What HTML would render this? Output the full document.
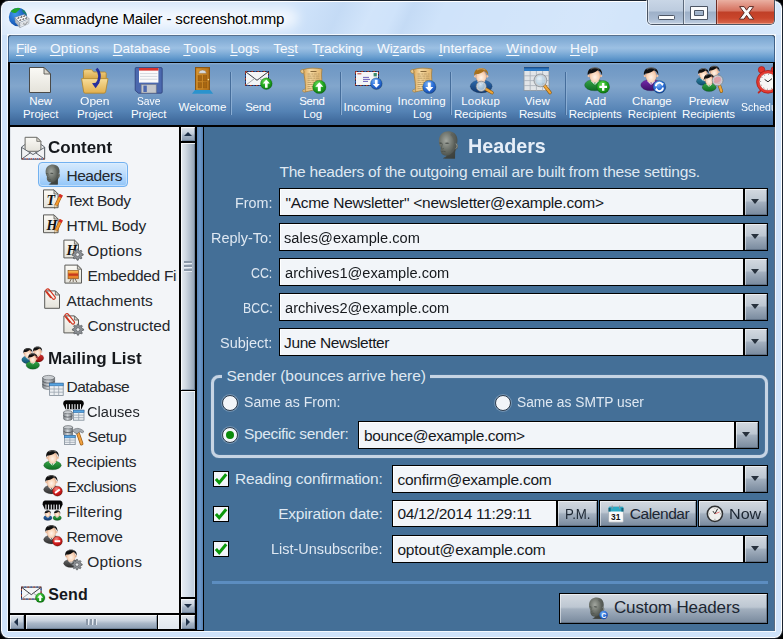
<!DOCTYPE html>
<html><head><meta charset="utf-8"><title>Gammadyne Mailer - screenshot.mmp</title>
<style>

html,body{margin:0;padding:0;}
body{width:783px;height:639px;background:#000;overflow:hidden;position:relative;font-family:"Liberation Sans",sans-serif;}
div,span,svg{position:absolute;box-sizing:border-box;}
.t{white-space:nowrap;line-height:1;z-index:50;}
.t u{text-decoration:underline;text-underline-offset:2.4px;text-decoration-thickness:1px;}
#win{left:0;top:0;width:783px;height:639px;border-radius:8.5px;background:#1b2430;overflow:hidden;}
#win2{left:1px;top:1px;width:781px;height:637px;border-radius:7.5px;background:#fff;}
#win3{left:2px;top:2px;width:779px;height:635px;border-radius:6.5px;background:#cfe3fa;}
#glass{left:2px;top:2px;width:779px;height:33px;border-radius:6.5px 6.5px 0 0;background:linear-gradient(115deg,rgba(255,255,255,.25) 0%,rgba(255,255,255,.1) 30%,rgba(255,255,255,0) 38%,rgba(120,160,210,.12) 43%,rgba(255,255,255,.06) 47%,rgba(255,255,255,0) 50%,rgba(120,160,210,.12) 52%,rgba(255,255,255,0) 56%,rgba(255,255,255,.12) 75%,rgba(255,255,255,.0) 88%,rgba(255,255,255,.2) 100%);}
#tglow{left:6px;top:8px;width:292px;height:20px;border-radius:10px;background:rgba(255,255,255,.7);filter:blur(6px);}

#capbtns{left:647px;top:0;width:128px;height:25px;border:1px solid #4a5565;border-top:none;border-radius:0 0 5px 5px;overflow:hidden;box-shadow:0 0 0 1px rgba(255,255,255,.55);}
#capbtns div{top:0;height:24px;}
.cb1{background:linear-gradient(180deg,#c9d6e6 0%,#bccbde 46%,#9db0c8 50%,#a9bbd2 80%,#c2d0e2 100%);box-shadow:inset 1px 0 0 rgba(255,255,255,.5),inset 0 -1px 0 rgba(255,255,255,.45);}
.cbx{background:linear-gradient(180deg,#eab0a2 0%,#dc8574 30%,#d4705d 46%,#c03f27 50%,#c9452b 75%,#d86a50 100%);border-left:1px solid #6b2d25;box-shadow:inset 1px 0 0 rgba(255,255,255,.35),inset 0 -1px 0 rgba(255,200,180,.5);}
#cliw{left:7px;top:34px;width:769px;height:598px;background:#f4f9fe;}
#client{left:8px;top:35px;width:767px;height:596px;background:#000;overflow:hidden;border-radius:3px 3px 0 0;}
#menubar{left:0;top:0;width:767px;height:27px;border-radius:3px 3px 0 0;border-top:1px solid #56708e;border-left:1px solid #3f6189;border-right:1px solid #3f6189;background:linear-gradient(180deg,#79a5d0 0%,#8bb3da 25%,#9cc0e3 46%,#8ab4dc 60%,#6a9fd0 80%,#4986c0 100%);}
#toolbar{left:2px;top:28px;width:763px;height:62px;background:linear-gradient(180deg,#8eb1d5 0,#6f98c4 2px,#769dc7 20%,#82a6cc 37%,#7ca1c9 43%,#6c95c2 58%,#5482b4 78%,#436ea0 92%,#3e699a 100%);}
.sep{width:2px;top:9px;height:43px;background:linear-gradient(90deg,#456d9b 0 1px,#8aadd3 1px 2px);}
#left{left:2px;top:92px;width:169px;height:486px;background:#f3f5f8;overflow:hidden;}
#left:before{content:"";position:absolute;left:0;top:0;width:1px;height:100%;background:#dfe3e8;}
#sel{left:28px;top:35px;width:90px;height:25px;border:1px solid #72b1f0;border-radius:4px;background:linear-gradient(180deg,#d6eafd 0%,#c0defc 40%,#a6d0fa 75%,#90c5f8 100%);box-shadow:inset 0 0 0 1px rgba(225,240,255,.55);}
.sbv{background:linear-gradient(90deg,#e7ecf2 0%,#d3dbe4 30%,#b4c0ce 65%,#8fa0b3 100%);box-shadow:inset 1px 1px 0 rgba(255,255,255,.8),inset -1px -1px 0 rgba(100,118,140,.6);}
.sbbtn{background:linear-gradient(180deg,#e3e8ee 0%,#c4ceda 45%,#a6b4c5 60%,#8a9bb0 100%);box-shadow:inset 1px 1px 0 rgba(255,255,255,.65),inset -1px -1px 0 rgba(90,110,135,.55);}

i{position:absolute;display:block;}
.sbh{background:linear-gradient(180deg,#e6ebf1 0%,#c9d2dd 40%,#a9b7c7 60%,#8a9bb0 100%);box-shadow:inset 1px 1px 0 rgba(255,255,255,.7),inset -1px -1px 0 rgba(100,118,140,.6);}
.sbtv{background:linear-gradient(90deg,#e9eef4 0%,#d5dfea 50%,#bccbdb 100%);box-shadow:inset 1px 1px 0 rgba(255,255,255,.8),inset -1px 0 0 rgba(255,255,255,.5);}
.sbth{background:linear-gradient(180deg,#eef2f6 0%,#dfe6ee 100%);box-shadow:inset 1px 1px 0 rgba(255,255,255,.8);}
.arr{width:0;height:0;}
.au{left:3px;top:5px;border-left:4px solid transparent;border-right:4px solid transparent;border-bottom:4px solid #1f3148;}
.ad{left:3px;top:5px;border-left:4px solid transparent;border-right:4px solid transparent;border-top:4px solid #1f3148;}
.al{left:4px;top:3px;border-top:4px solid transparent;border-bottom:4px solid transparent;border-right:4px solid #1f3148;}
.ar{left:5px;top:3px;border-top:4px solid transparent;border-bottom:4px solid transparent;border-left:4px solid #1f3148;}
.gv{left:3px;width:8px;height:2px;background:#8b98a8;box-shadow:0 1px 0 rgba(235,240,246,.9);}
.gh{top:4px;width:2px;height:6px;background:#8b98a8;box-shadow:1px 0 0 rgba(235,240,246,.9);}
#split{left:189px;top:92px;width:6px;height:503px;background:linear-gradient(90deg,#5d88b9 0%,#6f9aca 50%,#5580b2 100%);}
#right{left:196px;top:92px;width:571px;height:504px;background:#446f97;border-right:1px solid #5b6b7e;}
.inp{background:#f2f5f9;border:1px solid #000;height:28px;box-shadow:inset 1px 1px 0 #fff;}
.btn{border:1px solid #000;background:linear-gradient(180deg,#d3d9e0 0%,#bdc7d2 45%,#a2afbe 52%,#78899d 100%);box-shadow:inset 1px 1px 0 rgba(255,255,255,.5),inset -1px -1px 0 rgba(70,85,105,.5);}
.dd{width:24px;height:28px;}
.dd:after{content:"";position:absolute;left:6px;top:10px;border-left:4.5px solid transparent;border-right:4.5px solid transparent;border-top:5px solid #27313d;}
.cb{width:16px;height:16px;border:1px solid #000;background:#f2f5f9;}
.rb{width:16px;height:16px;border-radius:8px;background:#f2f5f9;border:1px solid #2b3b4e;box-shadow:0 0 0 1px rgba(200,215,230,.35);}
.rb.on:after{content:"";position:absolute;left:3px;top:3px;width:8px;height:8px;border-radius:4px;background:#0b8a0b;}

</style></head><body>

<div id="win"><div id="win2"></div><div id="win3"></div><div id="glass"></div><div id="tglow"></div>

<div id="capbtns">
 <div class="cb1" style="left:0;width:35px;border-radius:0 0 0 4px"></div>
 <div class="cb1" style="left:35px;width:33px;border-left:1px solid #5d6a7c"></div>
 <div class="cbx" style="left:68px;width:60px;border-radius:0 0 4px 0"></div>
 <svg width="128" height="25" viewBox="0 0 128 25" style="left:0;top:0">
  <rect x="10.5" y="15.5" width="16" height="4" rx=".8" fill="#fbfcfd" stroke="#4c5564" stroke-width="1"/>
  <path d="M42.5 6.5 H59.5 V19.5 H42.5 Z M46.5 10.5 V15.5 H55.5 V10.5 Z" fill="#fbfcfd" fill-rule="evenodd" stroke="#4c5564" stroke-width="1" stroke-linejoin="round"/>
  <path d="M91.6 6.6 H96.2 L98.6 10.2 L101 6.6 H105.6 L101 12.8 L105.8 19.2 H101.2 L98.6 15.4 L96 19.2 H91.4 L96.2 12.8 Z" fill="#fbfbfb" stroke="#5a2a24" stroke-width="1" stroke-linejoin="round"/>
 </svg>
</div>
<div id="cliw"></div>
<div id="client">
 <div id="menubar"></div>
 <div id="toolbar"><div class="sep" style="left:220px"></div><div class="sep" style="left:330px"></div><div class="sep" style="left:440px"></div><div class="sep" style="left:555px"></div></div>
 <div id="left"><div id="sel"></div></div>
 <!-- vertical scrollbar (client-relative: abs-8, abs-35) -->
 <div class="sbbtn" style="left:173px;top:92px;width:14px;height:14px"><i class="arr au"></i></div>
 <div class="sbv" style="left:173px;top:108px;width:14px;height:247px"><i class="gv" style="top:118px"></i><i class="gv" style="top:122px"></i><i class="gv" style="top:126px"></i></div>
 <div class="sbtv" style="left:173px;top:356px;width:14px;height:206px"></div>
 <div class="sbbtn" style="left:173px;top:564px;width:14px;height:14px"><i class="arr ad"></i></div>
 <!-- horizontal scrollbar -->
 <div class="sbbtn" style="left:2px;top:580px;width:14px;height:14px"><i class="arr al"></i></div>
 <div class="sbh" style="left:18px;top:580px;width:131px;height:14px"><i class="gh" style="left:60px"></i><i class="gh" style="left:64px"></i><i class="gh" style="left:68px"></i></div>
 <div class="sbth" style="left:150px;top:580px;width:21px;height:14px"></div>
 <div class="sbbtn" style="left:173px;top:580px;width:14px;height:14px"><i class="arr ar"></i></div>
 <div id="split"></div>
 <div id="right"><div class="inp" style="left:75px;top:61px;width:465px"></div><div class="btn dd" style="left:540px;top:61px"></div><div class="inp" style="left:75px;top:96px;width:465px"></div><div class="btn dd" style="left:540px;top:96px"></div><div class="inp" style="left:75px;top:131px;width:465px"></div><div class="btn dd" style="left:540px;top:131px"></div><div class="inp" style="left:75px;top:166px;width:465px"></div><div class="btn dd" style="left:540px;top:166px"></div><div class="inp" style="left:75px;top:201px;width:465px"></div><div class="btn dd" style="left:540px;top:201px"></div><div style="left:7px;top:248px;width:557px;height:83px;border:3px solid #c6d4e4;border-radius:8px;box-shadow:0 0 1px rgba(205,218,232,.6),inset 0 0 1px rgba(205,218,232,.6)"></div><div style="left:18px;top:245px;width:208px;height:8px;background:#446f97"></div><div class="rb" style="left:18px;top:268px"></div><div class="rb" style="left:291px;top:268px"></div><div class="rb on" style="left:18px;top:300px"></div><div class="inp" style="left:154px;top:294px;width:377px"></div><div class="btn dd" style="left:531px;top:294px"></div><div class="cb" style="left:9px;top:344px"><svg width="16" height="16" viewBox="0 0 16 16" style="left:-1px;top:-1px"><path d="M2.9 8 L6.2 11.7 L13.2 3.3" fill="none" stroke="#0b980b" stroke-width="3"/></svg></div><div class="cb" style="left:9px;top:379px"><svg width="16" height="16" viewBox="0 0 16 16" style="left:-1px;top:-1px"><path d="M2.9 8 L6.2 11.7 L13.2 3.3" fill="none" stroke="#0b980b" stroke-width="3"/></svg></div><div class="cb" style="left:9px;top:414px"><svg width="16" height="16" viewBox="0 0 16 16" style="left:-1px;top:-1px"><path d="M2.9 8 L6.2 11.7 L13.2 3.3" fill="none" stroke="#0b980b" stroke-width="3"/></svg></div><div class="inp" style="left:188px;top:338px;width:352px"></div><div class="btn dd" style="left:540px;top:338px"></div><div class="inp" style="left:188px;top:373px;width:165px;height:27px"></div><div class="btn" style="left:353px;top:373px;width:41px;height:27px"></div><div class="btn" style="left:395px;top:373px;width:98px;height:27px"></div><div class="btn" style="left:494px;top:373px;width:70px;height:27px"></div><div class="inp" style="left:188px;top:408px;width:352px"></div><div class="btn dd" style="left:540px;top:408px"></div><div style="left:8px;top:454px;width:556px;height:3px;background:#5c8dc0"></div><div class="btn" style="left:355px;top:466px;width:209px;height:31px"></div></div>
</div>
</div>
<span class="t" id="t0" style="left:33.9px;top:10.7px;font-size:15px;color:#000;letter-spacing:-0.144px;text-shadow:0 0 5px #fff,0 0 9px #fff;">Gammadyne Mailer - screenshot.mmp</span>
<span class="t" id="t1" style="left:16.0px;top:42.0px;font-size:13.6px;color:#f6f9fd;letter-spacing:-0.374px;"><u>F</u>ile</span>
<span class="t" id="t2" style="left:49.9px;top:42.0px;font-size:13.6px;color:#f6f9fd;letter-spacing:0.373px;"><u>O</u>ptions</span>
<span class="t" id="t3" style="left:112.8px;top:42.0px;font-size:13.6px;color:#f6f9fd;letter-spacing:-0.086px;"><u>D</u>atabase</span>
<span class="t" id="t4" style="left:183.3px;top:42.0px;font-size:13.6px;color:#f6f9fd;letter-spacing:0.266px;"><u>T</u>ools</span>
<span class="t" id="t5" style="left:230.2px;top:42.0px;font-size:13.6px;color:#f6f9fd;letter-spacing:-0.161px;"><u>L</u>ogs</span>
<span class="t" id="t6" style="left:273.3px;top:42.0px;font-size:13.6px;color:#f6f9fd;letter-spacing:-0.046px;">Te<u>s</u>t</span>
<span class="t" id="t7" style="left:311.9px;top:42.0px;font-size:13.6px;color:#f6f9fd;letter-spacing:-0.092px;">T<u>r</u>acking</span>
<span class="t" id="t8" style="left:377.0px;top:42.0px;font-size:13.6px;color:#f6f9fd;letter-spacing:-0.168px;">Wi<u>z</u>ards</span>
<span class="t" id="t9" style="left:438.9px;top:42.0px;font-size:13.6px;color:#f6f9fd;letter-spacing:0.074px;"><u>I</u>nterface</span>
<span class="t" id="t10" style="left:506.2px;top:42.0px;font-size:13.6px;color:#f6f9fd;letter-spacing:0.365px;"><u>W</u>indow</span>
<span class="t" id="t11" style="left:570.0px;top:42.0px;font-size:13.6px;color:#f6f9fd;letter-spacing:0.044px;"><u>H</u>elp</span>
<span class="t" id="t12" style="left:29.3px;top:95.9px;font-size:11.5px;color:#fbfdff;letter-spacing:-0.108px;">New</span>
<span class="t" id="t13" style="left:23.0px;top:108.7px;font-size:11.5px;color:#fbfdff;letter-spacing:-0.049px;">Project</span>
<span class="t" id="t14" style="left:80.4px;top:95.9px;font-size:11.5px;color:#fbfdff;transform:scaleX(1.0501);transform-origin:0 0;">Open</span>
<span class="t" id="t15" style="left:77.0px;top:108.7px;font-size:11.5px;color:#fbfdff;letter-spacing:-0.049px;">Project</span>
<span class="t" id="t16" style="left:137.0px;top:95.9px;font-size:11.5px;color:#fbfdff;transform:scaleX(0.8962);transform-origin:0 0;">Save</span>
<span class="t" id="t17" style="left:131.0px;top:108.7px;font-size:11.5px;color:#fbfdff;letter-spacing:-0.049px;">Project</span>
<span class="t" id="t18" style="left:178.6px;top:102.1px;font-size:11.5px;color:#fbfdff;">Welcome</span>
<span class="t" id="t19" style="left:245.3px;top:102.1px;font-size:11.5px;color:#fbfdff;letter-spacing:-0.353px;">Send</span>
<span class="t" id="t20" style="left:299.3px;top:95.9px;font-size:11.5px;color:#fbfdff;letter-spacing:-0.420px;">Send</span>
<span class="t" id="t21" style="left:303.2px;top:108.7px;font-size:11.5px;color:#fbfdff;letter-spacing:-0.144px;">Log</span>
<span class="t" id="t22" style="left:343.6px;top:102.1px;font-size:11.5px;color:#fbfdff;letter-spacing:0.204px;">Incoming</span>
<span class="t" id="t23" style="left:397.6px;top:95.9px;font-size:11.5px;color:#fbfdff;letter-spacing:0.204px;">Incoming</span>
<span class="t" id="t24" style="left:413.0px;top:108.7px;font-size:11.5px;color:#fbfdff;letter-spacing:-0.094px;">Log</span>
<span class="t" id="t25" style="left:461.3px;top:95.9px;font-size:11.5px;color:#fbfdff;letter-spacing:0.153px;">Lookup</span>
<span class="t" id="t26" style="left:453.9px;top:108.7px;font-size:11.5px;color:#fbfdff;letter-spacing:-0.100px;">Recipients</span>
<span class="t" id="t27" style="left:524.7px;top:95.9px;font-size:11.5px;color:#fbfdff;letter-spacing:0.127px;">View</span>
<span class="t" id="t28" style="left:518.9px;top:108.7px;font-size:11.5px;color:#fbfdff;letter-spacing:-0.210px;">Results</span>
<span class="t" id="t29" style="left:584.9px;top:95.9px;font-size:11.5px;color:#fbfdff;letter-spacing:0.366px;">Add</span>
<span class="t" id="t30" style="left:568.8px;top:108.7px;font-size:11.5px;color:#fbfdff;letter-spacing:-0.078px;">Recipients</span>
<span class="t" id="t31" style="left:632.0px;top:95.9px;font-size:11.5px;color:#fbfdff;letter-spacing:-0.119px;">Change</span>
<span class="t" id="t32" style="left:627.7px;top:108.7px;font-size:11.5px;color:#fbfdff;letter-spacing:0.081px;">Recipient</span>
<span class="t" id="t33" style="left:688.8px;top:95.9px;font-size:11.5px;color:#fbfdff;letter-spacing:-0.201px;">Preview</span>
<span class="t" id="t34" style="left:682.0px;top:108.7px;font-size:11.5px;color:#fbfdff;letter-spacing:-0.067px;">Recipients</span>
<span class="t" id="t35" style="left:741.3px;top:102.1px;font-size:11.5px;color:#fbfdff;transform:scaleX(0.9174);transform-origin:0 0;width:35.09998658798282px;overflow:hidden;">Scheduler</span>
<span class="t" id="t36" style="left:48.2px;top:139.7px;font-size:16px;color:#15181c;font-weight:bold;transform:scaleX(1.0616);transform-origin:0 0;">Content</span>
<span class="t" id="t37" style="left:66.4px;top:167.7px;font-size:15.5px;color:#24272c;letter-spacing:-0.432px;">Headers</span>
<span class="t" id="t38" style="left:66.4px;top:192.7px;font-size:15.5px;color:#24272c;letter-spacing:-0.445px;">Text Body</span>
<span class="t" id="t39" style="left:66.4px;top:217.7px;font-size:15.5px;color:#24272c;letter-spacing:-0.183px;">HTML Body</span>
<span class="t" id="t40" style="left:87.2px;top:242.7px;font-size:15.5px;color:#24272c;letter-spacing:0.213px;">Options</span>
<span class="t" id="t41" style="left:87.4px;top:267.7px;font-size:15.5px;color:#24272c;letter-spacing:-0.309px;width:89.6px;overflow:hidden;">Embedded Files</span>
<span class="t" id="t42" style="left:66.4px;top:292.7px;font-size:15.5px;color:#24272c;letter-spacing:0.024px;">Attachments</span>
<span class="t" id="t43" style="left:87.4px;top:317.7px;font-size:15.5px;color:#24272c;letter-spacing:-0.058px;">Constructed</span>
<span class="t" id="t44" style="left:48.2px;top:351.1px;font-size:16px;color:#15181c;font-weight:bold;transform:scaleX(1.0655);transform-origin:0 0;">Mailing List</span>
<span class="t" id="t45" style="left:66.4px;top:378.7px;font-size:15.5px;color:#24272c;letter-spacing:-0.437px;">Database</span>
<span class="t" id="t46" style="left:87.4px;top:403.7px;font-size:15.5px;color:#24272c;transform:scaleX(0.9418);transform-origin:0 0;">Clauses</span>
<span class="t" id="t47" style="left:87.4px;top:428.7px;font-size:15.5px;color:#24272c;letter-spacing:-0.279px;">Setup</span>
<span class="t" id="t48" style="left:66.4px;top:453.7px;font-size:15.5px;color:#24272c;letter-spacing:-0.253px;">Recipients</span>
<span class="t" id="t49" style="left:66.4px;top:478.7px;font-size:15.5px;color:#24272c;letter-spacing:-0.444px;">Exclusions</span>
<span class="t" id="t50" style="left:66.4px;top:503.7px;font-size:15.5px;color:#24272c;letter-spacing:0.107px;">Filtering</span>
<span class="t" id="t51" style="left:66.4px;top:528.7px;font-size:15.5px;color:#24272c;letter-spacing:-0.244px;">Remove</span>
<span class="t" id="t52" style="left:87.2px;top:553.7px;font-size:15.5px;color:#24272c;letter-spacing:0.213px;">Options</span>
<span class="t" id="t53" style="left:48.2px;top:587.3px;font-size:16px;color:#15181c;font-weight:bold;letter-spacing:0.158px;">Send</span>
<span class="t" id="t54" style="left:468.2px;top:134.8px;font-size:21px;color:#e6eef8;font-weight:bold;transform:scaleX(0.9391);transform-origin:0 0;">Headers</span>
<span class="t" id="t55" style="left:279.4px;top:164.0px;font-size:15.5px;color:#dfe8f2;letter-spacing:-0.217px;">The headers of the outgoing email are built from these settings.</span>
<span class="t" id="t56" style="left:234.8px;top:194.8px;font-size:15.5px;color:#dfe8f2;transform:scaleX(0.9248);transform-origin:0 0;">From:</span>
<span class="t" id="t57" style="left:211.1px;top:229.7px;font-size:15.5px;color:#dfe8f2;transform:scaleX(0.9338);transform-origin:0 0;">Reply-To:</span>
<span class="t" id="t58" style="left:250.9px;top:264.9px;font-size:15.5px;color:#dfe8f2;transform:scaleX(0.7976);transform-origin:0 0;">CC:</span>
<span class="t" id="t59" style="left:242.6px;top:299.9px;font-size:15.5px;color:#dfe8f2;transform:scaleX(0.7990);transform-origin:0 0;">BCC:</span>
<span class="t" id="t60" style="left:220.0px;top:334.9px;font-size:15.5px;color:#dfe8f2;transform:scaleX(0.9343);transform-origin:0 0;">Subject:</span>
<span class="t" id="t61" style="left:285.4px;top:194.8px;font-size:15.5px;color:#15181c;letter-spacing:-0.257px;">&quot;Acme Newsletter&quot; &lt;newsletter@example.com&gt;</span>
<span class="t" id="t62" style="left:284.1px;top:229.7px;font-size:15.5px;color:#15181c;transform:scaleX(0.9426);transform-origin:0 0;">sales@example.com</span>
<span class="t" id="t63" style="left:284.8px;top:264.9px;font-size:15.5px;color:#15181c;transform:scaleX(0.9426);transform-origin:0 0;">archives1@example.com</span>
<span class="t" id="t64" style="left:284.8px;top:299.9px;font-size:15.5px;color:#15181c;transform:scaleX(0.9426);transform-origin:0 0;">archives2@example.com</span>
<span class="t" id="t65" style="left:284.1px;top:334.9px;font-size:15.5px;color:#15181c;letter-spacing:-0.417px;">June Newsletter</span>
<span class="t" id="t66" style="left:226.6px;top:367.9px;font-size:15.5px;color:#dfe8f2;letter-spacing:-0.086px;">Sender (bounces arrive here)</span>
<span class="t" id="t67" style="left:244.1px;top:394.4px;font-size:15.5px;color:#dfe8f2;transform:scaleX(0.9109);transform-origin:0 0;">Same as From:</span>
<span class="t" id="t68" style="left:517.0px;top:394.4px;font-size:15.5px;color:#dfe8f2;transform:scaleX(0.8891);transform-origin:0 0;">Same as SMTP user</span>
<span class="t" id="t69" style="left:244.1px;top:426.2px;font-size:15.5px;color:#dfe8f2;letter-spacing:-0.372px;">Specific sender:</span>
<span class="t" id="t70" style="left:364.1px;top:427.7px;font-size:15.5px;color:#15181c;letter-spacing:-0.385px;">bounce@example.com&gt;</span>
<span class="t" id="t71" style="left:234.9px;top:470.7px;font-size:15.5px;color:#dfe8f2;letter-spacing:-0.139px;">Reading confirmation:</span>
<span class="t" id="t72" style="left:278.2px;top:505.9px;font-size:15.5px;color:#dfe8f2;letter-spacing:-0.201px;">Expiration date:</span>
<span class="t" id="t73" style="left:271.2px;top:541.0px;font-size:15.5px;color:#dfe8f2;transform:scaleX(0.9322);transform-origin:0 0;">List-Unsubscribe:</span>
<span class="t" id="t74" style="left:397.4px;top:471.7px;font-size:15.5px;color:#15181c;letter-spacing:-0.246px;">confirm@example.com</span>
<span class="t" id="t75" style="left:397.4px;top:506.3px;font-size:15.5px;color:#15181c;letter-spacing:-0.296px;">04/12/2014 11:29:11</span>
<span class="t" id="t76" style="left:397.4px;top:541.7px;font-size:15.5px;color:#15181c;letter-spacing:-0.154px;">optout@example.com</span>
<span class="t" id="t77" style="left:564.9px;top:505.8px;font-size:15.5px;color:#1c2632;transform:scaleX(0.8554);transform-origin:0 0;">P.M.</span>
<span class="t" id="t78" style="left:629.8px;top:505.8px;font-size:15.5px;color:#1c2632;letter-spacing:-0.429px;">Calendar</span>
<span class="t" id="t79" style="left:728.9px;top:505.8px;font-size:15.5px;color:#1c2632;transform:scaleX(1.0395);transform-origin:0 0;">Now</span>
<span class="t" id="t80" style="left:613.9px;top:599.1px;font-size:17px;color:#1c2632;letter-spacing:-0.112px;">Custom Headers</span><svg width="783" height="639" viewBox="0 0 783 639" style="left:0;top:0;z-index:40;pointer-events:none">
<defs>
<linearGradient id="gPage" x1="0" y1="0" x2="0" y2="1"><stop offset="0" stop-color="#fbfaf6"/><stop offset="1" stop-color="#e4e2da"/></linearGradient>
<linearGradient id="gFold" x1="0" y1="0" x2="0" y2="1"><stop offset="0" stop-color="#f7dd9a"/><stop offset="1" stop-color="#e2b04e"/></linearGradient>
<linearGradient id="gFoldB" x1="0" y1="0" x2="0" y2="1"><stop offset="0" stop-color="#f3d58c"/><stop offset="1" stop-color="#d9a645"/></linearGradient>
<radialGradient id="gGreen" cx=".4" cy=".3" r=".8"><stop offset="0" stop-color="#6ddc5a"/><stop offset=".5" stop-color="#1fa51f"/><stop offset="1" stop-color="#0b6b10"/></radialGradient>
<radialGradient id="gBlue" cx=".4" cy=".3" r=".8"><stop offset="0" stop-color="#7fb4f5"/><stop offset=".5" stop-color="#2a6fd8"/><stop offset="1" stop-color="#123f9a"/></radialGradient>
<radialGradient id="gRed" cx=".4" cy=".3" r=".8"><stop offset="0" stop-color="#f58a80"/><stop offset=".5" stop-color="#d81f1f"/><stop offset="1" stop-color="#8f0c0c"/></radialGradient>
<radialGradient id="gSkin" cx=".5" cy=".6" r=".6"><stop offset="0" stop-color="#fff4ea"/><stop offset=".7" stop-color="#f8cfb0"/><stop offset="1" stop-color="#d99a78"/></radialGradient>
<radialGradient id="gHead" cx=".38" cy=".35" r=".75"><stop offset="0" stop-color="#a3a7a0"/><stop offset=".45" stop-color="#6d726b"/><stop offset="1" stop-color="#343935"/></radialGradient>
<linearGradient id="gBodyG" x1="0" y1="0" x2="0" y2="1"><stop offset="0" stop-color="#3aa84a"/><stop offset="1" stop-color="#0d6a22"/></linearGradient>
<linearGradient id="gBodyB" x1="0" y1="0" x2="0" y2="1"><stop offset="0" stop-color="#2d6db0"/><stop offset="1" stop-color="#12386e"/></linearGradient>
<linearGradient id="gBodyT" x1="0" y1="0" x2="0" y2="1"><stop offset="0" stop-color="#2d86a8"/><stop offset="1" stop-color="#11506e"/></linearGradient>
<linearGradient id="gBodyP" x1="0" y1="0" x2="0" y2="1"><stop offset="0" stop-color="#7a2bb0"/><stop offset="1" stop-color="#3c0e66"/></linearGradient>
<linearGradient id="gBodyR" x1="0" y1="0" x2="0" y2="1"><stop offset="0" stop-color="#d83030"/><stop offset="1" stop-color="#8a0c0c"/></linearGradient>
<linearGradient id="gBodyK" x1="0" y1="0" x2="0" y2="1"><stop offset="0" stop-color="#6a6a6a"/><stop offset="1" stop-color="#2e2e2e"/></linearGradient>
<linearGradient id="gScroll" x1="0" y1="0" x2="1" y2="0"><stop offset="0" stop-color="#dba85c"/><stop offset=".35" stop-color="#f5d9a2"/><stop offset="1" stop-color="#e0b36c"/></linearGradient>
<linearGradient id="gCyl" x1="0" y1="0" x2="1" y2="0"><stop offset="0" stop-color="#7d8288"/><stop offset=".45" stop-color="#d4d8dc"/><stop offset="1" stop-color="#6d7278"/></linearGradient>
<linearGradient id="gDoor" x1="0" y1="0" x2="1" y2="0"><stop offset="0" stop-color="#d9952e"/><stop offset="1" stop-color="#b8741a"/></linearGradient>
<radialGradient id="gGlobe" cx=".35" cy=".35" r=".8"><stop offset="0" stop-color="#3f97e8"/><stop offset=".6" stop-color="#1b62c2"/><stop offset="1" stop-color="#0d3f8c"/></radialGradient>
<radialGradient id="gLens" cx=".4" cy=".35" r=".7"><stop offset="0" stop-color="#e8f3fa"/><stop offset="1" stop-color="#9cc0d8"/></radialGradient>
<clipPath id="cTB"><rect x="10" y="63" width="763" height="62"/></clipPath>
</defs><circle cx="18" cy="17" r="9.2" fill="url(#gGlobe)"/><path d="M10.6 11.5 C12.5 8.6 16.5 7.6 20.3 8.2 C19.6 10.2 17.6 10.8 16.4 12.4 C14.6 13.4 12.4 13 10.6 11.5 Z" fill="#22a52a"/><path d="M22 9 C24.5 10.2 26.6 12.6 27 15.6 C25.4 14.6 24 13 22.6 12 Z" fill="#1c8f4a" fill-opacity=".7"/><path d="M14.8 17.6 L24.4 14.4 L29.2 18.6 L19.6 22.6 Z" fill="#fdfdfd" stroke="#8d97a3" stroke-width=".5"/><path d="M14.8 17.6 L19.6 22.6 L19.9 27.6 L15.4 22.4 Z" fill="#c9ced6" stroke="#7d8894" stroke-width=".5"/><path d="M19.6 22.6 L29.2 18.6 L28.8 23.6 L19.9 27.6 Z" fill="#f2f4f6" stroke="#7d8894" stroke-width=".5"/><path d="M19.8 24.2 L29 20.2 M19.85 25.8 L28.9 21.8" stroke="#a9b1bb" stroke-width=".5"/><path d="M15.2 19.4 L19.7 24.3 M15.3 21 L19.8 26" stroke="#8f98a3" stroke-width=".5"/><g fill="#1a1a1a"><ellipse cx="18.4" cy="18" rx="1.1" ry=".55" transform="rotate(-18 18.4 18)"/><ellipse cx="21.4" cy="17" rx="1.1" ry=".55" transform="rotate(-18 21.4 17)"/><ellipse cx="24.3" cy="16.1" rx="1.1" ry=".55" transform="rotate(-18 24.3 16.1)"/><ellipse cx="20.4" cy="20.1" rx="1.1" ry=".55" transform="rotate(-18 20.4 20.1)"/><ellipse cx="23.4" cy="19.1" rx="1.1" ry=".55" transform="rotate(-18 23.4 19.1)"/><ellipse cx="26.3" cy="18.1" rx="1.1" ry=".55" transform="rotate(-18 26.3 18.1)"/></g><path d="M23 23.6 L25.4 24.6 L27.6 21.6" fill="none" stroke="#555" stroke-width=".6"/><g clip-path="url(#cTB)"><path d="M29.5 67.5 H44 L50.5 74 V92.5 H29.5 Z" fill="url(#gPage)" stroke="#4a4a48" stroke-width="1"/><path d="M44 67.5 V74 H50.5 Z" fill="#d9d6cc" stroke="#4a4a48" stroke-width=".8" stroke-linejoin="round"/><path d="M83.5 71.5 C83.5 70.2 84.3 69.6 85.5 69.6 H91.5 L93.6 72 H104.5 C105.6 72 106.2 72.6 106.2 73.6 V79 H83.5 Z" fill="url(#gFoldB)" stroke="#b08428" stroke-width=".8"/><path d="M81.6 78.6 H108 L105.6 92 C105.4 92.8 104.8 93.2 104 93.2 H85.2 C84.4 93.2 83.9 92.8 83.7 92 Z" fill="url(#gFold)" stroke="#b08428" stroke-width=".8"/><path d="M96.5 68.6 C100.4 72.6 100.6 79 96.4 84.2" fill="none" stroke="#27309c" stroke-width="2.6"/><path d="M92 83.2 L99.8 82.2 L95.6 88.2 Z" fill="#27309c"/><path d="M136 67.6 H161 C161.8 67.6 162.2 68 162.2 68.8 V92 C162.2 92.8 161.8 93.2 161 93.2 H138.4 L135.2 90.4 V68.8 C135.2 68 135.4 67.6 136 67.6 Z" fill="#4b68ae" stroke="#2c3f78" stroke-width=".8"/><rect x="139" y="68" width="19.4" height="14.6" fill="#fbfbfb"/><rect x="139" y="68" width="19.4" height="2.6" fill="#d8332d"/><path d="M140 73.6 H157.4 M140 76.4 H157.4 M140 79.2 H157.4" stroke="#c9ced6" stroke-width=".8"/><rect x="141.2" y="84.6" width="15" height="8.4" fill="#c4c7cc" stroke="#7d828a" stroke-width=".6"/><rect x="143.4" y="85.6" width="3.4" height="6.4" fill="#4b68ae"/><path d="M192 93.8 L195.4 89.6 H209.8 L213.2 93.8 Z" fill="#2b93cd"/><rect x="195" y="67" width="15" height="23" fill="#8a5512"/><rect x="196.2" y="68.2" width="12.6" height="21.6" fill="url(#gDoor)"/><rect x="198" y="75.6" width="3.6" height="5.4" fill="#a9660f" stroke="#8a5512" stroke-width=".4"/><rect x="203.2" y="75.6" width="3.6" height="5.4" fill="#a9660f" stroke="#8a5512" stroke-width=".4"/><rect x="198" y="82.6" width="3.6" height="5.4" fill="#a9660f" stroke="#8a5512" stroke-width=".4"/><rect x="203.2" y="82.6" width="3.6" height="5.4" fill="#a9660f" stroke="#8a5512" stroke-width=".4"/><path d="M198.6 73.4 A3.9 3.4 0 0 1 206.4 73.4 Z" fill="#d8dde2" stroke="#8a5512" stroke-width=".4"/><circle cx="208.4" cy="79.6" r=".8" fill="#f3e2a0"/><rect x="245.5" y="71.5" width="23" height="14" fill="#f4f5f6" stroke="#2b2f3a" stroke-width="1"/><rect x="245.5" y="71.5" width="23" height="14" fill="none" stroke="#c0392b" stroke-width="1" stroke-dasharray="1.5 4.5"/><rect x="245.5" y="71.5" width="23" height="14" fill="none" stroke="#2a4fb0" stroke-width="1" stroke-dasharray="1.5 4.5" stroke-dashoffset="3"/><path d="M246 72 L257.0 80.3 L268 72" fill="none" stroke="#3a3d45" stroke-width="1"/><path d="M246 85 L254.6 78.5 M268 85 L259.4 78.5" fill="none" stroke="#8d9096" stroke-width=".8"/><circle cx="266.3" cy="83.7" r="5.9" fill="url(#gGreen)" stroke="rgba(0,40,0,.35)" stroke-width=".6"/><path d="M266.3 79.57000000000001 L269.84000000000003 83.50333333333333 H267.5783333333333 V87.63333333333334 H265.0216666666667 V83.50333333333333 H262.76 Z" fill="#fff"/><path d="M303.5 69.5 C308.5 67.5 317.5 68 322.0 69 C320.5 76 323.0 83 321.5 90 C315.5 89 309.5 91 305.0 92 C306.5 85 304.0 77 303.5 69.5 Z" fill="url(#gScroll)" stroke="#a8803c" stroke-width=".8"/><path d="M304.0 69.6 C300.5 68.5 299.2 72.8 302.7 73.3 C304.5 73.2 304.5 70.6 302.9 71" fill="#e9cb92" stroke="#a8803c" stroke-width=".8"/><path d="M305.0 92 C302.5 92.8 301.7 89.5 304.5 89.3" fill="#e3c083" stroke="#a8803c" stroke-width=".8"/><path d="M310.5 71.5 H316.5" stroke="#8a6a3a" stroke-width="1"/><path d="M307.5 74.0 H319.5" stroke="#b0905a" stroke-width=".8" stroke-dasharray="3 .8 2 .6"/><path d="M307.5 76.1 H319.5" stroke="#b0905a" stroke-width=".8" stroke-dasharray="4 .8 3 .6"/><path d="M307.5 78.2 H319.5" stroke="#b0905a" stroke-width=".8" stroke-dasharray="5 .8 2 .6"/><path d="M307.5 80.3 H319.5" stroke="#b0905a" stroke-width=".8" stroke-dasharray="3 .8 3 .6"/><path d="M307.5 82.4 H319.5" stroke="#b0905a" stroke-width=".8" stroke-dasharray="4 .8 2 .6"/><path d="M307.5 84.5 H319.5" stroke="#b0905a" stroke-width=".8" stroke-dasharray="5 .8 3 .6"/><path d="M307.5 86.6 H319.5" stroke="#b0905a" stroke-width=".8" stroke-dasharray="3 .8 2 .6"/><path d="M307.5 88.7 H319.5" stroke="#b0905a" stroke-width=".8" stroke-dasharray="4 .8 3 .6"/><circle cx="319.3" cy="86.9" r="6.7" fill="url(#gGreen)" stroke="rgba(0,40,0,.35)" stroke-width=".6"/><path d="M319.3 82.21000000000001 L323.32 86.67666666666668 H320.75166666666667 V91.36666666666667 H317.84833333333336 V86.67666666666668 H315.28000000000003 Z" fill="#fff"/><rect x="355.5" y="71.5" width="23" height="14" fill="#f4f5f6" stroke="#2b2f3a" stroke-width="1"/><rect x="355.5" y="71.5" width="23" height="14" fill="none" stroke="#c0392b" stroke-width="1" stroke-dasharray="1.5 4.5"/><rect x="355.5" y="71.5" width="23" height="14" fill="none" stroke="#2a4fb0" stroke-width="1" stroke-dasharray="1.5 4.5" stroke-dashoffset="3"/><path d="M363 77.4 h6 M363 79.4 h7 M363 81.4 h5" stroke="#5b4fb5" stroke-width=".9"/><rect x="373.6" y="73" width="3.2" height="3.4" fill="#3a8a6a"/><path d="M357.4 73.8 h4" stroke="#c0392b" stroke-width="1"/><circle cx="376.3" cy="83.7" r="5.9" fill="url(#gBlue)" stroke="rgba(0,40,0,.35)" stroke-width=".6"/><path d="M376.3 87.83 L379.84000000000003 83.89666666666668 H377.5783333333333 V79.76666666666667 H375.0216666666667 V83.89666666666668 H372.76 Z" fill="#fff"/><path d="M413.5 69.5 C418.5 67.5 427.5 68 432.0 69 C430.5 76 433.0 83 431.5 90 C425.5 89 419.5 91 415.0 92 C416.5 85 414.0 77 413.5 69.5 Z" fill="url(#gScroll)" stroke="#a8803c" stroke-width=".8"/><path d="M414.0 69.6 C410.5 68.5 409.2 72.8 412.7 73.3 C414.5 73.2 414.5 70.6 412.9 71" fill="#e9cb92" stroke="#a8803c" stroke-width=".8"/><path d="M415.0 92 C412.5 92.8 411.7 89.5 414.5 89.3" fill="#e3c083" stroke="#a8803c" stroke-width=".8"/><path d="M420.5 71.5 H426.5" stroke="#8a6a3a" stroke-width="1"/><path d="M417.5 74.0 H429.5" stroke="#b0905a" stroke-width=".8" stroke-dasharray="3 .8 2 .6"/><path d="M417.5 76.1 H429.5" stroke="#b0905a" stroke-width=".8" stroke-dasharray="4 .8 3 .6"/><path d="M417.5 78.2 H429.5" stroke="#b0905a" stroke-width=".8" stroke-dasharray="5 .8 2 .6"/><path d="M417.5 80.3 H429.5" stroke="#b0905a" stroke-width=".8" stroke-dasharray="3 .8 3 .6"/><path d="M417.5 82.4 H429.5" stroke="#b0905a" stroke-width=".8" stroke-dasharray="4 .8 2 .6"/><path d="M417.5 84.5 H429.5" stroke="#b0905a" stroke-width=".8" stroke-dasharray="5 .8 3 .6"/><path d="M417.5 86.6 H429.5" stroke="#b0905a" stroke-width=".8" stroke-dasharray="3 .8 2 .6"/><path d="M417.5 88.7 H429.5" stroke="#b0905a" stroke-width=".8" stroke-dasharray="4 .8 3 .6"/><circle cx="429.3" cy="86.9" r="6.7" fill="url(#gBlue)" stroke="rgba(0,40,0,.35)" stroke-width=".6"/><path d="M429.3 91.59 L433.32 87.12333333333333 H430.75166666666667 V82.43333333333334 H427.84833333333336 V87.12333333333333 H425.28000000000003 Z" fill="#fff"/><ellipse cx="481.2" cy="86.30" rx="11" ry="6.6" fill="url(#gBodyB)" stroke="rgba(0,0,0,.3)" stroke-width=".5"/><path d="M477.03 81.20 L481.20 85.37 L485.37 81.20 Z" fill="#f6f6f6"/><path d="M480.53 82.54 L481.20 86.24 L481.87 82.54 Z" fill="url(#gBodyB)"/><circle cx="475.42" cy="76.36" r="1.34" fill="#f3c8ac"/><circle cx="486.98" cy="76.36" r="1.34" fill="#f3c8ac"/><ellipse cx="481.2" cy="76.36" rx="5.24" ry="6.59" fill="url(#gSkin)" stroke="rgba(150,90,60,.45)" stroke-width=".4"/><path d="M474.35 75.96 C472.33 65.34 490.07 65.34 488.05 75.96 C487.58 73.14 485.90 71.66 484.02 70.99 C481.87 73.00 478.18 74.35 475.82 74.08 C475.15 74.48 474.61 75.15 474.35 75.96 Z" fill="#a8701c"/><path d="M477.50 69.64 C479.86 68.10 483.22 68.43 484.90 69.78" fill="none" stroke="rgba(255,255,255,.28)" stroke-width="1.48" stroke-linecap="round"/><path d="M484.9142492738633 88.46664540975357 L492 92.6" stroke="#8a5a10" stroke-width="3.4" stroke-linecap="round"/><path d="M484.9142492738633 88.46664540975357 L492 92.6" stroke="#f0a63a" stroke-width="2.2" stroke-linecap="round"/><circle cx="481.2" cy="86.3" r="4.3" fill="url(#gLens)" fill-opacity=".85" stroke="#c9ced3" stroke-width="1.6"/><circle cx="481.2" cy="86.3" r="5.1" fill="none" stroke="#6f757b" stroke-width=".6"/><rect x="524" y="67" width="25" height="23.6" fill="#e2e5e8" stroke="#8a949e" stroke-width=".8"/><rect x="524" y="67" width="25" height="4" fill="#2f7cc6"/><rect x="524" y="67" width="25" height="1.4" fill="#1c4f8c"/><path d="M530.2 71 V90.6 M536.4 71 V90.6 M542.6 71 V90.6 M524 75.8 H549 M524 80.6 H549 M524 85.6 H549" stroke="#a7afb8" stroke-width=".8"/><path d="M543.8629860235309 84.80087807157048 L550 92.6" stroke="#8a5a10" stroke-width="3.4" stroke-linecap="round"/><path d="M543.8629860235309 84.80087807157048 L550 92.6" stroke="#f0a63a" stroke-width="2.2" stroke-linecap="round"/><circle cx="540.4" cy="80.4" r="5.6" fill="url(#gLens)" fill-opacity=".85" stroke="#c9ced3" stroke-width="1.6"/><circle cx="540.4" cy="80.4" r="6.3999999999999995" fill="none" stroke="#6f757b" stroke-width=".6"/><ellipse cx="594.9" cy="85.05" rx="10.4" ry="5.8" fill="url(#gBodyG)" stroke="rgba(0,0,0,.3)" stroke-width=".5"/><path d="M590.59 80.80 L594.90 85.11 L599.21 80.80 Z" fill="#f6f6f6"/><path d="M594.21 82.19 L594.90 86.01 L595.59 82.19 Z" fill="url(#gBodyG)"/><circle cx="588.93" cy="75.80" r="1.39" fill="#f3c8ac"/><circle cx="600.87" cy="75.80" r="1.39" fill="#f3c8ac"/><ellipse cx="594.9" cy="75.80" rx="5.42" ry="6.81" fill="url(#gSkin)" stroke="rgba(150,90,60,.45)" stroke-width=".4"/><path d="M587.82 75.38 C585.73 64.41 604.07 64.41 601.98 75.38 C601.50 72.47 599.76 70.94 597.82 70.25 C595.59 72.33 591.78 73.72 589.34 73.44 C588.65 73.86 588.09 74.55 587.82 75.38 Z" fill="#101010"/><path d="M591.08 68.86 C593.51 67.26 596.98 67.61 598.72 69.00" fill="none" stroke="rgba(255,255,255,.28)" stroke-width="1.53" stroke-linecap="round"/><circle cx="603.2" cy="86.9" r="6.4" fill="url(#gGreen)" stroke="rgba(0,40,0,.35)" stroke-width=".6"/><path d="M599.36 86.9 H607.0400000000001 M603.2 83.06 V90.74000000000001" stroke="#fff" stroke-width="2.3466666666666667" fill="none"/><ellipse cx="651.1" cy="85.05" rx="10.4" ry="5.8" fill="url(#gBodyP)" stroke="rgba(0,0,0,.3)" stroke-width=".5"/><path d="M646.79 80.80 L651.10 85.11 L655.41 80.80 Z" fill="#f6f6f6"/><path d="M650.41 82.19 L651.10 86.01 L651.79 82.19 Z" fill="url(#gBodyP)"/><circle cx="645.13" cy="75.80" r="1.39" fill="#f3c8ac"/><circle cx="657.07" cy="75.80" r="1.39" fill="#f3c8ac"/><ellipse cx="651.1" cy="75.80" rx="5.42" ry="6.81" fill="url(#gSkin)" stroke="rgba(150,90,60,.45)" stroke-width=".4"/><path d="M644.02 75.38 C641.93 64.41 660.27 64.41 658.18 75.38 C657.70 72.47 655.96 70.94 654.02 70.25 C651.79 72.33 647.98 73.72 645.54 73.44 C644.85 73.86 644.29 74.55 644.02 75.38 Z" fill="#101010"/><path d="M647.28 68.86 C649.71 67.26 653.18 67.61 654.92 69.00" fill="none" stroke="rgba(255,255,255,.28)" stroke-width="1.53" stroke-linecap="round"/><circle cx="659.4" cy="86.9" r="6.4" fill="url(#gBlue)" stroke="rgba(0,40,0,.35)" stroke-width=".6"/><path d="M655.88 86.26 A3.4 3.4 0 0 1 662.1733333333333 84.34" stroke="#fff" stroke-width="1.8133333333333332" fill="none"/><path d="M662.92 87.54 A3.4 3.4 0 0 1 656.6266666666667 89.46000000000001" stroke="#fff" stroke-width="1.8133333333333332" fill="none"/><path d="M660.68 82.74000000000001 L663.88 83.48666666666668 L662.1733333333333 86.26 Z" fill="#fff"/><path d="M658.12 91.06 L654.92 90.31333333333333 L656.6266666666667 87.54 Z" fill="#fff"/><ellipse cx="703.4" cy="81.17" rx="7" ry="4.2" fill="url(#gBodyT)" stroke="rgba(0,0,0,.3)" stroke-width=".5"/><path d="M700.28 78.10 L703.40 81.22 L706.52 78.10 Z" fill="#f6f6f6"/><path d="M702.90 79.11 L703.40 81.88 L703.90 79.11 Z" fill="url(#gBodyT)"/><circle cx="699.07" cy="74.47" r="1.01" fill="#f3c8ac"/><circle cx="707.73" cy="74.47" r="1.01" fill="#f3c8ac"/><ellipse cx="703.4" cy="74.47" rx="3.93" ry="4.94" fill="url(#gSkin)" stroke="rgba(150,90,60,.45)" stroke-width=".4"/><path d="M698.26 74.17 C696.75 66.21 710.05 66.21 708.54 74.17 C708.19 72.05 706.93 70.94 705.52 70.44 C703.90 71.95 701.13 72.96 699.37 72.76 C698.86 73.06 698.46 73.56 698.26 74.17 Z" fill="#101010"/><path d="M700.63 69.43 C702.39 68.27 704.91 68.52 706.17 69.53" fill="none" stroke="rgba(255,255,255,.28)" stroke-width="1.11" stroke-linecap="round"/><ellipse cx="714.3" cy="78.78" rx="7" ry="4.2" fill="url(#gBodyR)" stroke="rgba(0,0,0,.3)" stroke-width=".5"/><path d="M711.18 75.70 L714.30 78.82 L717.42 75.70 Z" fill="#f6f6f6"/><path d="M713.80 76.71 L714.30 79.48 L714.80 76.71 Z" fill="url(#gBodyR)"/><circle cx="709.97" cy="72.07" r="1.01" fill="#f3c8ac"/><circle cx="718.63" cy="72.07" r="1.01" fill="#f3c8ac"/><ellipse cx="714.3" cy="72.07" rx="3.93" ry="4.94" fill="url(#gSkin)" stroke="rgba(150,90,60,.45)" stroke-width=".4"/><path d="M709.16 71.77 C707.65 63.81 720.95 63.81 719.44 71.77 C719.09 69.65 717.83 68.54 716.42 68.04 C714.80 69.55 712.03 70.56 710.27 70.36 C709.76 70.66 709.36 71.16 709.16 71.77 Z" fill="#101010"/><path d="M711.53 67.03 C713.29 65.87 715.81 66.12 717.07 67.13" fill="none" stroke="rgba(255,255,255,.28)" stroke-width="1.11" stroke-linecap="round"/><ellipse cx="709.2" cy="87.18" rx="7" ry="4.4" fill="url(#gBodyG)" stroke="rgba(0,0,0,.3)" stroke-width=".5"/><path d="M706.08 83.90 L709.20 87.02 L712.32 83.90 Z" fill="#f6f6f6"/><path d="M708.70 84.91 L709.20 87.68 L709.70 84.91 Z" fill="url(#gBodyG)"/><circle cx="704.87" cy="80.27" r="1.01" fill="#f3c8ac"/><circle cx="713.53" cy="80.27" r="1.01" fill="#f3c8ac"/><ellipse cx="709.2" cy="80.27" rx="3.93" ry="4.94" fill="url(#gSkin)" stroke="rgba(150,90,60,.45)" stroke-width=".4"/><path d="M704.06 79.97 C702.55 72.01 715.85 72.01 714.34 79.97 C713.99 77.85 712.73 76.74 711.32 76.24 C709.70 77.75 706.93 78.76 705.17 78.56 C704.66 78.86 704.26 79.36 704.06 79.97 Z" fill="#101010"/><path d="M706.43 75.23 C708.19 74.07 710.71 74.32 711.97 75.33" fill="none" stroke="rgba(255,255,255,.28)" stroke-width="1.11" stroke-linecap="round"/><path d="M719.1267685733183 84.739236997852 L721.4 91.2" stroke="#8a5a10" stroke-width="3.4" stroke-linecap="round"/><path d="M719.1267685733183 84.739236997852 L721.4 91.2" stroke="#f0a63a" stroke-width="2.2" stroke-linecap="round"/><circle cx="717.6" cy="80.4" r="4.6" fill="#e7b8c0" fill-opacity=".85" stroke="#c9ced3" stroke-width="1.6"/><circle cx="717.6" cy="80.4" r="5.3999999999999995" fill="none" stroke="#6f757b" stroke-width=".6"/><circle cx="761.6" cy="69.8" r="3.3" fill="#e0322a" stroke="#9c1712" stroke-width=".6"/><circle cx="774.4" cy="69.8" r="3.3" fill="#e0322a" stroke="#9c1712" stroke-width=".6"/><path d="M760.4 90.8 L758.6 92.6" stroke="#c5241d" stroke-width="1.8" stroke-linecap="round"/><circle cx="768" cy="81.8" r="11.4" fill="#e63a30" stroke="#a81a14" stroke-width=".8"/><circle cx="768" cy="81.8" r="8.8" fill="#f7f7f5" stroke="#b9332c" stroke-width=".6"/><path d="M768 81.8 L764.6 79.4 M768 81.8 L772 78.6" stroke="#222" stroke-width="1"/><circle cx="768" cy="81.8" r="7.4" fill="none" stroke="#555" stroke-width="1" stroke-dasharray=".7 3.17"/></g><path d="M21.6 147 L33 138.6 L44.6 147 V159 H21.6 Z" fill="#e9ebee" stroke="#555b63" stroke-width=".9"/><path d="M25.1 137.3 H36.800000000000004 L40.900000000000006 141.4 V151.3 H25.1 Z" fill="url(#gPage)" stroke="#6a6a66" stroke-width="1"/><path d="M36.800000000000004 137.3 V141.4 H40.900000000000006 Z" fill="#d9d6cc" stroke="#6a6a66" stroke-width=".8" stroke-linejoin="round"/><path d="M21.6 147.4 L33 154.6 L44.6 147.4 V159.2 H21.6 Z" fill="#f1f2f4" stroke="#555b63" stroke-width=".9" stroke-linejoin="round"/><path d="M21.8 159 L30.6 152.6 M44.4 159 L35.4 152.6" stroke="#4a4f57" stroke-width=".9"/><path d="M22.2 158.8 H44.2" stroke="#c0392b" stroke-width="1" stroke-dasharray="1.4 2.8"/><path d="M22.2 158.8 H44.2" stroke="#3a56b0" stroke-width="1" stroke-dasharray="1.4 2.8" stroke-dashoffset="2.1"/><path d="M47.08 176.79 C45.18 173.87 44.80 168.77 47.84 166.22 C50.88 163.82 56.20 163.96 58.48 167.31 C60.00 169.86 59.62 172.41 59.24 173.87 C60.38 173.87 60.38 177.15 58.63 177.88 L57.87 179.70 L57.72 184.51 L48.60 184.51 C49.74 183.71 50.88 183.34 51.26 182.61 C49.36 182.61 47.46 181.52 47.23 180.06 C46.62 178.97 46.78 177.88 47.08 176.79 Z" fill="url(#gHead)"/><path d="M51.64 182.61 C53.92 182.61 56.20 180.43 57.72 177.88 L57.80 184.51 L49.74 184.51 C50.88 184.07 51.49 183.34 51.64 182.61 Z" fill="#3d423e" fill-opacity=".75"/><path d="M45.71 173.29 C46.70 172.71 47.84 172.85 48.30 173.43 C47.54 174.02 46.32 174.02 45.71 173.29 Z M49.97 173.29 C51.26 172.56 52.78 172.71 53.54 173.43 C52.40 174.16 50.88 174.16 49.97 173.29 Z" fill="#3f4440" fill-opacity=".8"/><path d="M48.30 173.73 C47.99 175.33 47.23 176.79 47.38 177.51 C48.14 177.81 49.06 177.51 49.36 176.93" fill="none" stroke="#50554f" stroke-width="0.5319999999999999"/><path d="M47.54 179.41 C48.60 179.12 49.82 179.26 50.73 179.63" fill="none" stroke="#4a4f4a" stroke-width="0.6080000000000001"/><path d="M58.18 173.73 C59.70 173.58 59.70 176.79 58.33 177.37" fill="none" stroke="#b4b8b2" stroke-width="0.6080000000000001"/><path d="M54.68 166.59 C56.96 168.04 58.10 170.96 57.72 174.60 C57.57 176.06 56.96 178.24 55.44 179.70" fill="none" stroke="#555a55" stroke-opacity=".5" stroke-width="1.6720000000000002"/><path d="M43.5 189.9 H54.0 L58.1 194.0 V207.70000000000002 H43.5 Z" fill="url(#gPage)" stroke="#5b5b58" stroke-width="1"/><path d="M54.0 189.9 V194.0 H58.1 Z" fill="#d9d6cc" stroke="#5b5b58" stroke-width=".8" stroke-linejoin="round"/><text x="46.6" y="205.0" font-family="Liberation Serif, serif" font-weight="bold" font-style="italic" font-size="14" fill="#111">T</text><path d="M61.2 194.8 L55.9097942591206 205.7010300115091" stroke="#a85a14" stroke-width="3.4" stroke-linecap="butt"/><path d="M61.2 194.8 L55.9097942591206 205.7010300115091" stroke="#f39a2b" stroke-width="2.2" stroke-linecap="butt"/><path d="M61.2 194.8 L60.06484497542882 197.13910732335881" stroke="#d62a2a" stroke-width="3.4"/><path d="M57.523884154198505 206.0397242845746 L54.6 208.4 L54.64498283314152 204.6426104081793 Z" fill="#f1d9b0" stroke="#8a6a3a" stroke-width=".4"/><path d="M55.75367736762946 207.62603066506512 L54.6 208.4 L54.49415803966702 207.01479334414216 Z" fill="#222"/><path d="M43.5 214.9 H54.0 L58.1 219.0 V232.70000000000002 H43.5 Z" fill="url(#gPage)" stroke="#5b5b58" stroke-width="1"/><path d="M54.0 214.9 V219.0 H58.1 Z" fill="#d9d6cc" stroke="#5b5b58" stroke-width=".8" stroke-linejoin="round"/><text x="46.6" y="230.0" font-family="Liberation Serif, serif" font-weight="bold" font-style="italic" font-size="14" fill="#111">H</text><path d="M61.2 219.8 L55.9097942591206 230.7010300115091" stroke="#a85a14" stroke-width="3.4" stroke-linecap="butt"/><path d="M61.2 219.8 L55.9097942591206 230.7010300115091" stroke="#f39a2b" stroke-width="2.2" stroke-linecap="butt"/><path d="M61.2 219.8 L60.06484497542882 222.13910732335881" stroke="#d62a2a" stroke-width="3.4"/><path d="M57.523884154198505 231.0397242845746 L54.6 233.4 L54.64498283314152 229.6426104081793 Z" fill="#f1d9b0" stroke="#8a6a3a" stroke-width=".4"/><path d="M55.75367736762946 232.62603066506512 L54.6 233.4 L54.49415803966702 232.01479334414216 Z" fill="#222"/><path d="M63.9 240.1 H74.4 L78.5 244.2 V257.9 H63.9 Z" fill="url(#gPage)" stroke="#5b5b58" stroke-width="1"/><path d="M74.4 240.1 V244.2 H78.5 Z" fill="#d9d6cc" stroke="#5b5b58" stroke-width=".8" stroke-linejoin="round"/><text x="66.6" y="255" font-family="Liberation Serif, serif" font-weight="bold" font-style="italic" font-size="14" fill="#111">H</text><path d="M83.17 253.99 L83.17 255.21 L81.47 255.72 L81.13 256.54 L81.97 258.10 L81.10 258.97 L79.54 258.13 L78.72 258.47 L78.21 260.17 L76.99 260.17 L76.48 258.47 L75.66 258.13 L74.10 258.97 L73.23 258.10 L74.07 256.54 L73.73 255.72 L72.03 255.21 L72.03 253.99 L73.73 253.48 L74.07 252.66 L73.23 251.10 L74.10 250.23 L75.66 251.07 L76.48 250.73 L76.99 249.03 L78.21 249.03 L78.72 250.73 L79.54 251.07 L81.10 250.23 L81.97 251.10 L81.13 252.66 L81.47 253.48 Z" fill="#8b8f94" stroke="#505458" stroke-width=".7"/><circle cx="77.6" cy="254.6" r="1.8479999999999999" fill="#e8eaec" stroke="#505458" stroke-width=".6"/><path d="M64.9 265.1 H77.4 L81.5 269.20000000000005 V283.1 H64.9 Z" fill="url(#gPage)" stroke="#5b5b58" stroke-width="1"/><path d="M77.4 265.1 V269.20000000000005 H81.5 Z" fill="#d9d6cc" stroke="#5b5b58" stroke-width=".8" stroke-linejoin="round"/><rect x="68" y="270.4" width="10.4" height="8.4" fill="#e8842a" stroke="#7a4a1a" stroke-width=".6"/><rect x="68.4" y="273.6" width="9.6" height="2.2" fill="#c73a1e"/><rect x="68.4" y="270.8" width="9.6" height="1.8" fill="#f6b24a"/><path d="M73.2 278.8 V282 M71.2 279 L69.6 282.2 M75.2 279 L76.8 282.2" stroke="#5a4a3a" stroke-width=".8"/><path d="M44.7 290.9 H55.4 L59.5 295.0 V308.29999999999995 H44.7 Z" fill="url(#gPage)" stroke="#5b5b58" stroke-width="1"/><path d="M55.4 290.9 V295.0 H59.5 Z" fill="#d9d6cc" stroke="#5b5b58" stroke-width=".8" stroke-linejoin="round"/><path d="M47.0 291.8 L52.5 298.6 C54.0 300.20000000000005 56.2 298.40000000000003 55.0 296.8 L49.4 289.8 C47.6 287.6 44.4 290.0 46.2 292.20000000000005 L50.6 297.6" fill="none" stroke="#cf3420" stroke-width="1.15" stroke-linecap="round"/><path d="M63.9 315.9 H74.4 L78.5 320.0 V332.9 H63.9 Z" fill="url(#gPage)" stroke="#5b5b58" stroke-width="1"/><path d="M74.4 315.9 V320.0 H78.5 Z" fill="#d9d6cc" stroke="#5b5b58" stroke-width=".8" stroke-linejoin="round"/><path d="M66.2 316.59999999999997 L71.7 323.4 C73.2 325.0 75.4 323.2 74.2 321.59999999999997 L68.60000000000001 314.59999999999997 C66.8 312.4 63.6 314.79999999999995 65.4 317.0 L69.8 322.4" fill="none" stroke="#cf3420" stroke-width="1.15" stroke-linecap="round"/><path d="M83.57 328.99 L83.57 330.21 L81.87 330.72 L81.53 331.54 L82.37 333.10 L81.50 333.97 L79.94 333.13 L79.12 333.47 L78.61 335.17 L77.39 335.17 L76.88 333.47 L76.06 333.13 L74.50 333.97 L73.63 333.10 L74.47 331.54 L74.13 330.72 L72.43 330.21 L72.43 328.99 L74.13 328.48 L74.47 327.66 L73.63 326.10 L74.50 325.23 L76.06 326.07 L76.88 325.73 L77.39 324.03 L78.61 324.03 L79.12 325.73 L79.94 326.07 L81.50 325.23 L82.37 326.10 L81.53 327.66 L81.87 328.48 Z" fill="#8b8f94" stroke="#505458" stroke-width=".7"/><circle cx="78" cy="329.6" r="1.8479999999999999" fill="#e8eaec" stroke="#505458" stroke-width=".6"/><ellipse cx="27.9" cy="359.73" rx="6.2" ry="4" fill="url(#gBodyT)" stroke="rgba(0,0,0,.3)" stroke-width=".5"/><path d="M25.19 356.70 L27.90 359.41 L30.61 356.70 Z" fill="#f6f6f6"/><path d="M27.46 357.57 L27.90 359.98 L28.34 357.57 Z" fill="url(#gBodyT)"/><circle cx="24.14" cy="353.56" r="0.87" fill="#f3c8ac"/><circle cx="31.66" cy="353.56" r="0.87" fill="#f3c8ac"/><ellipse cx="27.9" cy="353.56" rx="3.41" ry="4.28" fill="url(#gSkin)" stroke="rgba(150,90,60,.45)" stroke-width=".4"/><path d="M23.44 353.29 C22.13 346.39 33.67 346.39 32.36 353.29 C32.05 351.46 30.96 350.50 29.73 350.06 C28.34 351.37 25.93 352.24 24.41 352.07 C23.97 352.33 23.62 352.77 23.44 353.29 Z" fill="#101010"/><path d="M25.50 349.19 C27.03 348.18 29.21 348.40 30.30 349.27" fill="none" stroke="rgba(255,255,255,.28)" stroke-width="0.96" stroke-linecap="round"/><ellipse cx="37.6" cy="358.12" rx="6.2" ry="4" fill="url(#gBodyR)" stroke="rgba(0,0,0,.3)" stroke-width=".5"/><path d="M34.89 355.10 L37.60 357.81 L40.31 355.10 Z" fill="#f6f6f6"/><path d="M37.16 355.97 L37.60 358.38 L38.04 355.97 Z" fill="url(#gBodyR)"/><circle cx="33.84" cy="351.96" r="0.87" fill="#f3c8ac"/><circle cx="41.36" cy="351.96" r="0.87" fill="#f3c8ac"/><ellipse cx="37.6" cy="351.96" rx="3.41" ry="4.28" fill="url(#gSkin)" stroke="rgba(150,90,60,.45)" stroke-width=".4"/><path d="M33.14 351.69 C31.83 344.79 43.37 344.79 42.06 351.69 C41.75 349.86 40.66 348.90 39.43 348.46 C38.04 349.77 35.63 350.64 34.11 350.47 C33.67 350.73 33.32 351.17 33.14 351.69 Z" fill="#101010"/><path d="M35.20 347.59 C36.73 346.58 38.91 346.80 40.00 347.67" fill="none" stroke="rgba(255,255,255,.28)" stroke-width="0.96" stroke-linecap="round"/><ellipse cx="32.8" cy="365.12" rx="6.8" ry="4.2" fill="url(#gBodyG)" stroke="rgba(0,0,0,.3)" stroke-width=".5"/><path d="M30.09 361.90 L32.80 364.61 L35.51 361.90 Z" fill="#f6f6f6"/><path d="M32.36 362.77 L32.80 365.18 L33.24 362.77 Z" fill="url(#gBodyG)"/><circle cx="29.04" cy="358.76" r="0.87" fill="#f3c8ac"/><circle cx="36.56" cy="358.76" r="0.87" fill="#f3c8ac"/><ellipse cx="32.8" cy="358.76" rx="3.41" ry="4.28" fill="url(#gSkin)" stroke="rgba(150,90,60,.45)" stroke-width=".4"/><path d="M28.34 358.49 C27.03 351.59 38.57 351.59 37.26 358.49 C36.95 356.66 35.86 355.70 34.63 355.26 C33.24 356.57 30.83 357.44 29.31 357.27 C28.87 357.53 28.52 357.97 28.34 358.49 Z" fill="#101010"/><path d="M30.40 354.39 C31.93 353.38 34.11 353.60 35.20 354.47" fill="none" stroke="rgba(255,255,255,.28)" stroke-width="0.96" stroke-linecap="round"/><path d="M42.6 377.67999999999995 V387.12 A6.0 2.2800000000000002 0 0 0 54.6 387.12 V377.67999999999995 Z" fill="url(#gCyl)" stroke="#555a60" stroke-width=".6"/><path d="M42.6 380.8266666666666 A6.0 2.2800000000000002 0 0 0 54.6 380.8266666666666" fill="none" stroke="#4c5157" stroke-width=".8"/><path d="M42.6 383.9733333333333 A6.0 2.2800000000000002 0 0 0 54.6 383.9733333333333" fill="none" stroke="#4c5157" stroke-width=".8"/><ellipse cx="48.6" cy="377.67999999999995" rx="6.0" ry="2.2800000000000002" fill="#c9cdd1" stroke="#555a60" stroke-width=".6"/><rect x="49.6" y="383.2" width="13.6" height="12.2" fill="#eceff2" stroke="#7f8a96" stroke-width=".8"/><rect x="49.6" y="383.2" width="13.6" height="2.6" fill="#58a6e2" stroke="#2a6aa8" stroke-width=".6"/><path d="M54.13333333333333 385.8 V395.4" stroke="#9aa5b0" stroke-width=".8"/><path d="M58.66666666666667 385.8 V395.4" stroke="#9aa5b0" stroke-width=".8"/><path d="M49.6 389.0 H63.2" stroke="#9aa5b0" stroke-width=".8"/><path d="M49.6 392.2 H63.2" stroke="#9aa5b0" stroke-width=".8"/><path d="M63.2 403.97999999999996 C63.2 400.65 64.848 400.2 67.32000000000001 400.2 H79.68 C82.152 400.2 83.80000000000001 400.65 83.80000000000001 403.97999999999996 L81.43100000000001 409.2 H65.569 Z" fill="#050505"/><rect x="66.10" y="404.16" width="1.05" height="5.22" fill="#f3f5f8"/><rect x="68.86" y="404.16" width="1.05" height="5.22" fill="#f3f5f8"/><rect x="71.62" y="404.16" width="1.05" height="5.22" fill="#f3f5f8"/><rect x="74.38" y="404.16" width="1.05" height="5.22" fill="#f3f5f8"/><rect x="77.14" y="404.16" width="1.05" height="5.22" fill="#f3f5f8"/><rect x="79.90" y="404.16" width="1.05" height="5.22" fill="#f3f5f8"/><path d="M63.6 412.23400000000004 V418.766 A4.3 1.634 0 0 0 72.2 418.766 V412.23400000000004 Z" fill="url(#gCyl)" stroke="#555a60" stroke-width=".6"/><path d="M63.6 415.50000000000006 A4.3 1.634 0 0 0 72.2 415.50000000000006" fill="none" stroke="#4c5157" stroke-width=".8"/><ellipse cx="67.9" cy="412.23400000000004" rx="4.3" ry="1.634" fill="#c9cdd1" stroke="#555a60" stroke-width=".6"/><rect x="73.4" y="410.2" width="10.6" height="10" fill="#eceff2" stroke="#7f8a96" stroke-width=".8"/><rect x="73.4" y="410.2" width="10.6" height="2.4" fill="#58a6e2" stroke="#2a6aa8" stroke-width=".6"/><path d="M78.7 412.59999999999997 V420.2" stroke="#9aa5b0" stroke-width=".8"/><path d="M73.4 415.1333333333333 H84.0" stroke="#9aa5b0" stroke-width=".8"/><path d="M73.4 417.66666666666663 H84.0" stroke="#9aa5b0" stroke-width=".8"/><path d="M63.6 427.31 V434.49000000000007 A4.5 1.71 0 0 0 72.6 434.49000000000007 V427.31 Z" fill="url(#gCyl)" stroke="#555a60" stroke-width=".6"/><path d="M63.6 430.9 A4.5 1.71 0 0 0 72.6 430.9" fill="none" stroke="#4c5157" stroke-width=".8"/><ellipse cx="68.1" cy="427.31" rx="4.5" ry="1.71" fill="#c9cdd1" stroke="#555a60" stroke-width=".6"/><rect x="64.6" y="435.6" width="10.6" height="9" fill="#eceff2" stroke="#7f8a96" stroke-width=".8"/><rect x="64.6" y="435.6" width="10.6" height="2.2" fill="#58a6e2" stroke="#2a6aa8" stroke-width=".6"/><path d="M69.89999999999999 437.8 V444.6" stroke="#9aa5b0" stroke-width=".8"/><path d="M64.6 440.06666666666666 H75.19999999999999" stroke="#9aa5b0" stroke-width=".8"/><path d="M64.6 442.33333333333337 H75.19999999999999" stroke="#9aa5b0" stroke-width=".8"/><path d="M78 433.4 L81.6 443.6" stroke="#9a5a12" stroke-width="3.6" stroke-linecap="round"/><path d="M78 433.4 L81.6 443.6" stroke="#f0a040" stroke-width="2.2" stroke-linecap="round"/><path d="M72.6 430.6 C75 427.6 80.4 427.4 84 431.6 L82.2 433 C80.6 431.6 79.4 431.4 78.6 432.4 L77 434 L74.4 432.4 Z" fill="#a7acb2" stroke="#5a5f66" stroke-width=".6"/><ellipse cx="52.5" cy="465.25" rx="8.8" ry="4.6" fill="url(#gBodyG)" stroke="rgba(0,0,0,.3)" stroke-width=".5"/><path d="M48.75 462.00 L52.50 465.75 L56.25 462.00 Z" fill="#f6f6f6"/><path d="M51.90 463.21 L52.50 466.54 L53.10 463.21 Z" fill="url(#gBodyG)"/><circle cx="47.30" cy="457.65" r="1.21" fill="#f3c8ac"/><circle cx="57.70" cy="457.65" r="1.21" fill="#f3c8ac"/><ellipse cx="52.5" cy="457.65" rx="4.72" ry="5.93" fill="url(#gSkin)" stroke="rgba(150,90,60,.45)" stroke-width=".4"/><path d="M46.33 457.28 C44.52 447.73 60.48 447.73 58.67 457.28 C58.25 454.74 56.73 453.41 55.04 452.81 C53.10 454.62 49.78 455.83 47.66 455.59 C47.06 455.95 46.57 456.56 46.33 457.28 Z" fill="#101010"/><path d="M49.17 451.60 C51.29 450.21 54.31 450.51 55.83 451.72" fill="none" stroke="rgba(255,255,255,.28)" stroke-width="1.33" stroke-linecap="round"/><ellipse cx="51.4" cy="489.50" rx="7.8" ry="4.4" fill="url(#gBodyK)" stroke="rgba(0,0,0,.3)" stroke-width=".5"/><path d="M47.79 486.40 L51.40 490.01 L55.01 486.40 Z" fill="#f6f6f6"/><path d="M50.82 487.56 L51.40 490.77 L51.98 487.56 Z" fill="url(#gBodyK)"/><circle cx="46.39" cy="482.21" r="1.16" fill="#f3c8ac"/><circle cx="56.41" cy="482.21" r="1.16" fill="#f3c8ac"/><ellipse cx="51.4" cy="482.21" rx="4.54" ry="5.71" fill="url(#gSkin)" stroke="rgba(150,90,60,.45)" stroke-width=".4"/><path d="M45.46 481.86 C43.71 472.66 59.09 472.66 57.34 481.86 C56.93 479.41 55.48 478.13 53.85 477.55 C51.98 479.29 48.78 480.46 46.74 480.23 C46.16 480.58 45.69 481.16 45.46 481.86 Z" fill="#101010"/><path d="M48.20 476.38 C50.24 475.04 53.15 475.33 54.60 476.50" fill="none" stroke="rgba(255,255,255,.28)" stroke-width="1.28" stroke-linecap="round"/><circle cx="57.4" cy="491.2" r="5" fill="url(#gRed)" stroke="rgba(0,40,0,.35)" stroke-width=".6"/><path d="M55.06666666666666 493.0333333333333 L59.733333333333334 489.3666666666667" stroke="#fff" stroke-width="2.0" fill="none"/><path d="M42.6 504.38 C42.6 501.05 44.2 500.6 46.6 500.6 H58.6 C61.0 500.6 62.6 501.05 62.6 504.38 L60.3 509.6 H44.9 Z" fill="#050505"/><rect x="45.40" y="504.56" width="1.05" height="5.22" fill="#f3f5f8"/><rect x="48.08" y="504.56" width="1.05" height="5.22" fill="#f3f5f8"/><rect x="50.76" y="504.56" width="1.05" height="5.22" fill="#f3f5f8"/><rect x="53.44" y="504.56" width="1.05" height="5.22" fill="#f3f5f8"/><rect x="56.12" y="504.56" width="1.05" height="5.22" fill="#f3f5f8"/><rect x="58.80" y="504.56" width="1.05" height="5.22" fill="#f3f5f8"/><ellipse cx="47.8" cy="518.02" rx="4.2" ry="2.4" fill="url(#gBodyB)" stroke="rgba(0,0,0,.3)" stroke-width=".5"/><path d="M45.93 516.30 L47.80 518.17 L49.67 516.30 Z" fill="#f6f6f6"/><path d="M47.50 516.90 L47.80 518.57 L48.10 516.90 Z" fill="url(#gBodyB)"/><circle cx="45.20" cy="514.12" r="0.60" fill="#f3c8ac"/><circle cx="50.40" cy="514.12" r="0.60" fill="#f3c8ac"/><ellipse cx="47.8" cy="514.12" rx="2.36" ry="2.96" fill="url(#gSkin)" stroke="rgba(150,90,60,.45)" stroke-width=".4"/><path d="M44.72 513.94 C43.81 509.16 51.79 509.16 50.88 513.94 C50.67 512.67 49.92 512.01 49.07 511.70 C48.10 512.61 46.44 513.22 45.38 513.09 C45.08 513.28 44.84 513.58 44.72 513.94 Z" fill="#101010"/><path d="M46.14 511.10 C47.20 510.40 48.71 510.55 49.46 511.16" fill="none" stroke="rgba(255,255,255,.28)" stroke-width="0.67" stroke-linecap="round"/><ellipse cx="57.2" cy="518.02" rx="4.2" ry="2.4" fill="url(#gBodyG)" stroke="rgba(0,0,0,.3)" stroke-width=".5"/><path d="M55.33 516.30 L57.20 518.17 L59.07 516.30 Z" fill="#f6f6f6"/><path d="M56.90 516.90 L57.20 518.57 L57.50 516.90 Z" fill="url(#gBodyG)"/><circle cx="54.60" cy="514.12" r="0.60" fill="#f3c8ac"/><circle cx="59.80" cy="514.12" r="0.60" fill="#f3c8ac"/><ellipse cx="57.2" cy="514.12" rx="2.36" ry="2.96" fill="url(#gSkin)" stroke="rgba(150,90,60,.45)" stroke-width=".4"/><path d="M54.12 513.94 C53.21 509.16 61.19 509.16 60.28 513.94 C60.07 512.67 59.32 512.01 58.47 511.70 C57.50 512.61 55.84 513.22 54.78 513.09 C54.48 513.28 54.24 513.58 54.12 513.94 Z" fill="#101010"/><path d="M55.54 511.10 C56.60 510.40 58.11 510.55 58.86 511.16" fill="none" stroke="rgba(255,255,255,.28)" stroke-width="0.67" stroke-linecap="round"/><ellipse cx="51.4" cy="539.50" rx="7.8" ry="4.4" fill="url(#gBodyK)" stroke="rgba(0,0,0,.3)" stroke-width=".5"/><path d="M47.79 536.40 L51.40 540.01 L55.01 536.40 Z" fill="#f6f6f6"/><path d="M50.82 537.56 L51.40 540.77 L51.98 537.56 Z" fill="url(#gBodyK)"/><circle cx="46.39" cy="532.21" r="1.16" fill="#f3c8ac"/><circle cx="56.41" cy="532.21" r="1.16" fill="#f3c8ac"/><ellipse cx="51.4" cy="532.21" rx="4.54" ry="5.71" fill="url(#gSkin)" stroke="rgba(150,90,60,.45)" stroke-width=".4"/><path d="M45.46 531.86 C43.71 522.66 59.09 522.66 57.34 531.86 C56.93 529.41 55.48 528.13 53.85 527.55 C51.98 529.29 48.78 530.46 46.74 530.23 C46.16 530.58 45.69 531.16 45.46 531.86 Z" fill="#101010"/><path d="M48.20 526.38 C50.24 525.04 53.15 525.33 54.60 526.50" fill="none" stroke="rgba(255,255,255,.28)" stroke-width="1.28" stroke-linecap="round"/><circle cx="57.4" cy="541.2" r="5" fill="url(#gRed)" stroke="rgba(0,40,0,.35)" stroke-width=".6"/><path d="M54.56666666666666 541.2 H60.233333333333334" stroke="#fff" stroke-width="2.0" fill="none"/><ellipse cx="71" cy="563.35" rx="7.4" ry="4.2" fill="url(#gBodyK)" stroke="rgba(0,0,0,.3)" stroke-width=".5"/><path d="M67.53 560.40 L71.00 563.87 L74.47 560.40 Z" fill="#f6f6f6"/><path d="M70.44 561.52 L71.00 564.60 L71.56 561.52 Z" fill="url(#gBodyK)"/><circle cx="66.18" cy="556.37" r="1.12" fill="#f3c8ac"/><circle cx="75.82" cy="556.37" r="1.12" fill="#f3c8ac"/><ellipse cx="71" cy="556.37" rx="4.37" ry="5.49" fill="url(#gSkin)" stroke="rgba(150,90,60,.45)" stroke-width=".4"/><path d="M65.29 556.03 C63.61 547.18 78.39 547.18 76.71 556.03 C76.32 553.68 74.92 552.45 73.35 551.89 C71.56 553.57 68.48 554.69 66.52 554.46 C65.96 554.80 65.51 555.36 65.29 556.03 Z" fill="#101010"/><path d="M67.92 550.77 C69.88 549.48 72.68 549.76 74.08 550.88" fill="none" stroke="rgba(255,255,255,.28)" stroke-width="1.23" stroke-linecap="round"/><path d="M82.17 564.03 L82.17 565.17 L80.60 565.64 L80.28 566.40 L81.06 567.85 L80.25 568.66 L78.80 567.88 L78.04 568.20 L77.57 569.77 L76.43 569.77 L75.96 568.20 L75.20 567.88 L73.75 568.66 L72.94 567.85 L73.72 566.40 L73.40 565.64 L71.83 565.17 L71.83 564.03 L73.40 563.56 L73.72 562.80 L72.94 561.35 L73.75 560.54 L75.20 561.32 L75.96 561.00 L76.43 559.43 L77.57 559.43 L78.04 561.00 L78.80 561.32 L80.25 560.54 L81.06 561.35 L80.28 562.80 L80.60 563.56 Z" fill="#8b8f94" stroke="#505458" stroke-width=".7"/><circle cx="77" cy="564.6" r="1.7160000000000002" fill="#e8eaec" stroke="#505458" stroke-width=".6"/><rect x="21.5" y="587.1" width="19.6" height="12" fill="#f4f5f6" stroke="#2b2f3a" stroke-width="1"/><rect x="21.5" y="587.1" width="19.6" height="12" fill="none" stroke="#c0392b" stroke-width="1" stroke-dasharray="1.5 4.5"/><rect x="21.5" y="587.1" width="19.6" height="12" fill="none" stroke="#2a4fb0" stroke-width="1" stroke-dasharray="1.5 4.5" stroke-dashoffset="3"/><path d="M22 587.6 L31.3 594.66 L40.6 587.6" fill="none" stroke="#3a3d45" stroke-width="1"/><path d="M22 598.6 L29.240000000000002 593.1 M40.6 598.6 L33.36 593.1" fill="none" stroke="#8d9096" stroke-width=".8"/><circle cx="40.2" cy="597.8" r="4.8" fill="url(#gGreen)" stroke="rgba(0,40,0,.35)" stroke-width=".6"/><path d="M40.2 594.4399999999999 L43.080000000000005 597.64 H41.24 V601.0 H39.160000000000004 V597.64 H37.32 Z" fill="#fff"/><path d="M440.83 147.88 C438.31 143.91 437.80 136.96 441.84 133.48 C445.88 130.21 452.95 130.40 455.98 134.97 C458.00 138.45 457.50 141.92 456.99 143.91 C458.50 143.91 458.50 148.38 456.18 149.37 L455.17 151.85 L454.97 158.40 L442.85 158.40 C444.37 157.31 445.88 156.81 446.38 155.82 C443.86 155.82 441.34 154.33 441.03 152.35 C440.22 150.86 440.43 149.37 440.83 147.88 Z" fill="url(#gHead)"/><path d="M446.89 155.82 C449.92 155.82 452.95 152.84 454.97 149.37 L455.07 158.40 L444.37 158.40 C445.88 157.81 446.69 156.81 446.89 155.82 Z" fill="#3d423e" fill-opacity=".75"/><path d="M439.01 143.11 C440.32 142.32 441.84 142.52 442.45 143.31 C441.44 144.11 439.82 144.11 439.01 143.11 Z M444.67 143.11 C446.38 142.12 448.41 142.32 449.42 143.31 C447.90 144.30 445.88 144.30 444.67 143.11 Z" fill="#3f4440" fill-opacity=".8"/><path d="M442.45 143.71 C442.04 145.89 441.03 147.88 441.23 148.87 C442.24 149.27 443.46 148.87 443.86 148.08" fill="none" stroke="#50554f" stroke-width="0.707"/><path d="M441.44 151.45 C442.85 151.06 444.47 151.25 445.68 151.75" fill="none" stroke="#4a4f4a" stroke-width="0.808"/><path d="M455.58 143.71 C457.60 143.51 457.60 147.88 455.78 148.67" fill="none" stroke="#b4b8b2" stroke-width="0.808"/><path d="M450.93 133.98 C453.96 135.96 455.48 139.94 454.97 144.90 C454.77 146.89 453.96 149.86 451.94 151.85" fill="none" stroke="#555a55" stroke-opacity=".5" stroke-width="2.2220000000000004"/><path d="M590.60 610.51 C588.60 607.43 588.20 602.03 591.40 599.33 C594.60 596.78 600.20 596.94 602.60 600.49 C604.20 603.19 603.80 605.89 603.40 607.43 C604.60 607.43 604.60 610.90 602.76 611.67 L601.96 613.60 L601.80 618.69 L592.20 618.69 C593.40 617.84 594.60 617.46 595.00 616.69 C593.00 616.69 591.00 615.53 590.76 613.99 C590.12 612.83 590.28 611.67 590.60 610.51 Z" fill="url(#gHead)"/><path d="M595.40 616.69 C597.80 616.69 600.20 614.37 601.80 611.67 L601.88 618.69 L593.40 618.69 C594.60 618.23 595.24 617.46 595.40 616.69 Z" fill="#3d423e" fill-opacity=".75"/><path d="M589.16 606.81 C590.20 606.19 591.40 606.35 591.88 606.97 C591.08 607.58 589.80 607.58 589.16 606.81 Z M593.64 606.81 C595.00 606.04 596.60 606.19 597.40 606.97 C596.20 607.74 594.60 607.74 593.64 606.81 Z" fill="#3f4440" fill-opacity=".8"/><path d="M591.88 607.27 C591.56 608.97 590.76 610.51 590.92 611.29 C591.72 611.59 592.68 611.29 593.00 610.67" fill="none" stroke="#50554f" stroke-width="0.5599999999999999"/><path d="M591.08 613.29 C592.20 612.98 593.48 613.14 594.44 613.52" fill="none" stroke="#4a4f4a" stroke-width="0.6400000000000001"/><path d="M602.28 607.27 C603.88 607.12 603.88 610.51 602.44 611.13" fill="none" stroke="#b4b8b2" stroke-width="0.6400000000000001"/><path d="M598.60 599.71 C601.00 601.26 602.20 604.34 601.80 608.20 C601.64 609.74 601.00 612.06 599.40 613.60" fill="none" stroke="#555a55" stroke-opacity=".5" stroke-width="1.7600000000000002"/><circle cx="603.6" cy="615" r="4.2" fill="url(#gBlue)"/><text x="601.2" y="617.6" font-family="Liberation Sans, sans-serif" font-weight="bold" font-size="7" fill="#fff">C</text><rect x="608.6" y="507" width="14.8" height="15.2" rx="1" fill="#fafafa" stroke="#9ea5ad" stroke-width=".7"/><path d="M608.6 511.4 V508 C608.6 507.2 609.2 506.8 610 506.8 H622 C622.8 506.8 623.4 507.2 623.4 508 V511.4 Z" fill="#2ba9c4"/><path d="M608.6 508 h2 v3.4 h-2 Z M621.4 508 h2 v3.4 h-2 Z" fill="#17627a"/><path d="M612.2 505.4 V508.6 M619.6 505.4 V508.6" stroke="#8d969e" stroke-width="1.1"/><text x="611" y="519.8" font-family="Liberation Sans, sans-serif" font-weight="bold" font-size="8.4" fill="#111">31</text><circle cx="714.9" cy="513.8" r="7.6" fill="#efefed" stroke="#2f3133" stroke-width="1.5"/><path d="M714.9 513.8 L717.6 508.8 M714.9 513.8 L713 511.2" stroke="#2a2a2a" stroke-width="1"/><path d="M714.9 513.8 L719.6 512" stroke="#d44" stroke-width=".7"/><path d="M714.9 507.6 v1.2 M714.9 518.8 v1.2 M708.7 513.8 h1.2 M719.9 513.8 h1.2" stroke="#888" stroke-width=".7"/></svg>
</body></html>
